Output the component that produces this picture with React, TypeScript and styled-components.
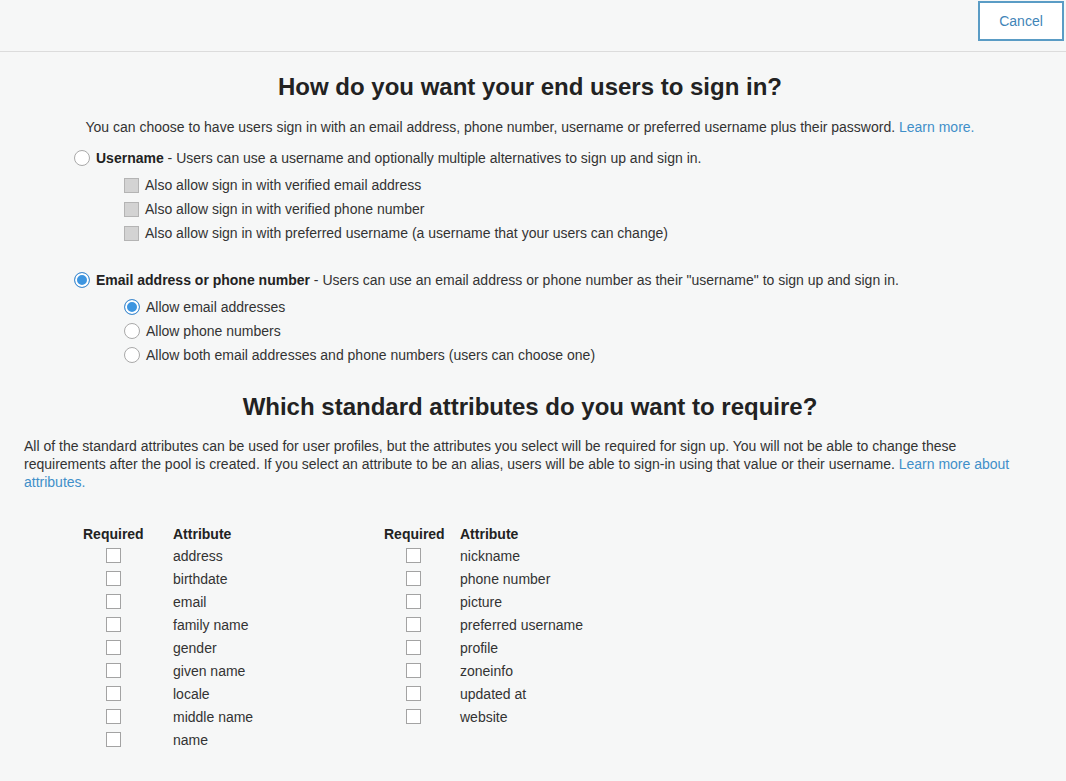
import React from "react";
import styled, { createGlobalStyle } from "styled-components";

const GlobalStyle = createGlobalStyle`
  html, body {
    margin: 0;
    padding: 0;
    background: #f6f7f7;
    font-family: "Liberation Sans", Arial, sans-serif;
    color: #333;
    font-size: 14px;
  }
`;

const Page = styled.div`
  width: 1066px;
  min-height: 781px;
  background: #f6f7f7;
`;

const TopBar = styled.div`
  height: 52px;
  display: flex;
  justify-content: flex-end;
  align-items: flex-start;
  padding-right: 2px;
  border-bottom: 1px solid #dcdcdc;
  box-sizing: border-box;
`;

const CancelButton = styled.button`
  width: 86px;
  height: 40px;
  margin-top: 1px;
  background: #fff;
  border: 2px solid #5a9cc5;
  color: #3f85b8;
  font-family: "Liberation Sans", Arial, sans-serif;
  font-size: 14px;
  cursor: pointer;
`;

const Content = styled.div`
  padding: 0 36px 0 24px;
`;

const Heading = styled.h2<{ $top: number }>`
  margin: ${(p) => p.$top}px 0 0;
  padding-left: 6px;
  text-align: center;
  font-size: 24px;
  line-height: 28px;
  font-weight: bold;
  color: #222;
`;

const Intro = styled.p`
  margin: 17px 0 0;
  padding-left: 6px;
  text-align: center;
  line-height: 18px;
`;

const Link = styled.a`
  color: #3f8fc9;
  text-decoration: none;
`;

const OptionGroup = styled.div<{ $top: number }>`
  margin-top: ${(p) => p.$top}px;
  padding-left: 50px;
`;

const Row = styled.label<{ $indent?: boolean }>`
  display: flex;
  align-items: center;
  gap: 6px;
  height: 24px;
  padding-left: ${(p) => (p.$indent ? 50 : 0)}px;
  line-height: 18px;
`;

const Radio = styled.span<{ $on?: boolean }>`
  width: 16px;
  height: 16px;
  border-radius: 50%;
  box-sizing: border-box;
  flex: none;
  border: 1px solid ${(p) => (p.$on ? "#4a8fcf" : "#a9a9a9")};
  background: ${(p) => (p.$on ? "#3d95e0" : "#fff")};
  box-shadow: ${(p) => (p.$on ? "inset 0 0 0 2px #fff" : "none")};
`;

const Check = styled.span<{ $disabled?: boolean }>`
  width: 15px;
  height: 15px;
  box-sizing: border-box;
  flex: none;
  border: 1px solid ${(p) => (p.$disabled ? "#b4b4b4" : "#a3a3a3")};
  background: ${(p) => (p.$disabled ? "#d3d3d3" : "#fff")};
`;

const Strong = styled.b`
  color: #222;
`;

const Para = styled.p`
  margin: 16px 0 0;
  line-height: 18px;
  color: #333;
`;

const Tables = styled.div`
  display: flex;
  margin-top: 33px;
  padding-left: 59px;
`;

const AttrTable = styled.div<{ $width: number; $reqWidth: number }>`
  width: ${(p) => p.$width}px;
  display: grid;
  grid-template-columns: ${(p) => p.$reqWidth}px 1fr;
  grid-template-rows: 20px;
  grid-auto-rows: 23px;
  align-items: center;
`;

const HeadCell = styled.div`
  font-weight: bold;
  color: #222;
`;

const CheckCell = styled.div<{ $offset: number }>`
  padding-left: ${(p) => p.$offset}px;
  display: flex;
`;

const left = [
  "address",
  "birthdate",
  "email",
  "family name",
  "gender",
  "given name",
  "locale",
  "middle name",
  "name",
];
const right = [
  "nickname",
  "phone number",
  "picture",
  "preferred username",
  "profile",
  "zoneinfo",
  "updated at",
  "website",
];

function Table({
  items,
  width,
  reqWidth,
  offset,
}: {
  items: string[];
  width: number;
  reqWidth: number;
  offset: number;
}) {
  return (
    <AttrTable $width={width} $reqWidth={reqWidth}>
      <HeadCell>Required</HeadCell>
      <HeadCell>Attribute</HeadCell>
      {items.map((a) => (
        <React.Fragment key={a}>
          <CheckCell $offset={offset}>
            <Check />
          </CheckCell>
          <div>{a}</div>
        </React.Fragment>
      ))}
    </AttrTable>
  );
}

export default function App() {
  return (
    <Page>
      <GlobalStyle />
      <TopBar>
        <CancelButton>Cancel</CancelButton>
      </TopBar>
      <Content>
        <Heading $top={21}>How do you want your end users to sign in?</Heading>
        <Intro>
          You can choose to have users sign in with an email address, phone
          number, username or preferred username plus their password.{" "}
          <Link href="#">Learn more.</Link>
        </Intro>

        <OptionGroup $top={10}>
          <Row>
            <Radio />
            <span>
              <Strong>Username</Strong> - Users can use a username and
              optionally multiple alternatives to sign up and sign in.
            </span>
          </Row>
          <Row $indent style={{ marginTop: 3 }}>
            <Check $disabled />
            <span>Also allow sign in with verified email address</span>
          </Row>
          <Row $indent>
            <Check $disabled />
            <span>Also allow sign in with verified phone number</span>
          </Row>
          <Row $indent>
            <Check $disabled />
            <span>
              Also allow sign in with preferred username (a username that your
              users can change)
            </span>
          </Row>
        </OptionGroup>

        <OptionGroup $top={23}>
          <Row>
            <Radio $on />
            <span>
              <Strong>Email address or phone number</Strong> - Users can use an
              email address or phone number as their "username" to sign up and
              sign in.
            </span>
          </Row>
          <Row $indent style={{ marginTop: 3 }}>
            <Radio $on />
            <span>Allow email addresses</span>
          </Row>
          <Row $indent>
            <Radio />
            <span>Allow phone numbers</span>
          </Row>
          <Row $indent>
            <Radio />
            <span>
              Allow both email addresses and phone numbers (users can choose
              one)
            </span>
          </Row>
        </OptionGroup>

        <Heading $top={26}>Which standard attributes do you want to require?</Heading>
        <Para>
          All of the standard attributes can be used for user profiles, but the
          attributes you select will be required for sign up. You will not be
          able to change these requirements after the pool is created. If you
          select an attribute to be an alias, users will be able to sign-in
          using that value or their username.{" "}
          <Link href="#">Learn more about attributes.</Link>
        </Para>

        <Tables>
          <Table items={left} width={301} reqWidth={90} offset={23} />
          <Table items={right} width={300} reqWidth={76} offset={22} />
        </Tables>
      </Content>
    </Page>
  );
}
